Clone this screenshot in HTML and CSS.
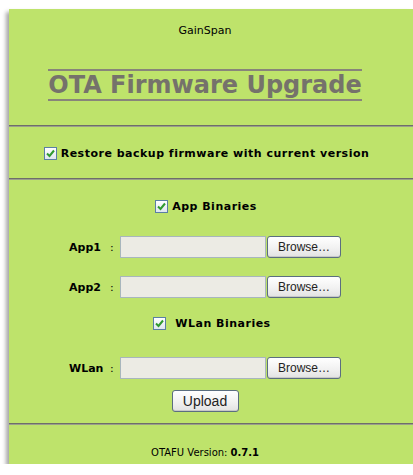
FILE: index.html
```html
<!DOCTYPE html>
<html>
<head>
<meta charset="utf-8">
<title>OTA Firmware Upgrade</title>
<link rel="stylesheet" href="styles.css">
</head>
<body>
<div class="panel">
  <div class="head">
    <div class="brand">GainSpan</div>
    <h1 class="title"><span>OTA Firmware Upgrade</span></h1>
  </div>
  <div class="rule"></div>
  <div class="restore">
    <label class="check bold">
      <span class="box"><svg viewBox="0 0 13 13" width="13" height="13"><path d="M3 6.5 L5.5 9 L10 3.5" fill="none" stroke="#2f9a2f" stroke-width="2"/></svg></span>Restore backup firmware with current version
    </label>
  </div>
  <div class="rule"></div>
  <form class="files">
    <label class="check bold group apps">
      <span class="box"><svg viewBox="0 0 13 13" width="13" height="13"><path d="M3 6.5 L5.5 9 L10 3.5" fill="none" stroke="#2f9a2f" stroke-width="2"/></svg></span>App Binaries
    </label>
    <div class="row">
      <span class="lbl">App1</span><span class="colon">:</span>
      <span class="field"></span>
      <button type="button" class="btn browse">Browse…</button>
    </div>
    <div class="row">
      <span class="lbl">App2</span><span class="colon">:</span>
      <span class="field"></span>
      <button type="button" class="btn browse">Browse…</button>
    </div>
    <label class="check bold group wlan">
      <span class="box"><svg viewBox="0 0 13 13" width="13" height="13"><path d="M3 6.5 L5.5 9 L10 3.5" fill="none" stroke="#2f9a2f" stroke-width="2"/></svg></span>WLan Binaries
    </label>
    <div class="row">
      <span class="lbl">WLan</span><span class="colon">:</span>
      <span class="field"></span>
      <button type="button" class="btn browse">Browse…</button>
    </div>
    <div class="submit">
      <button type="button" class="btn upload">Upload</button>
    </div>
  </form>
  <div class="rule"></div>
  <div class="foot">OTAFU Version: <b>0.7.1</b></div>
</div>
</body>
</html>
```

FILE: styles.css
```css
html, body {
  margin: 0;
  background: #ffffff;
}

body {
  font-family: "DejaVu Sans", Verdana, sans-serif;
  font-size: 11px;
  color: #000;
}

.panel {
  margin: 9px 0 0 9px;
  padding-right: 12px;
  height: 455px;
  background: #bee36b;
  box-shadow: -3px 3px 4px rgba(0, 0, 0, 0.35);
  display: flex;
  flex-direction: column;
}

.head {
  height: 116px;
  text-align: center;
}

.brand {
  padding-top: 15px;
  line-height: 13px;
}

.title {
  margin: 32px 0 0;
  font-family: "DejaVu Sans", sans-serif;
  font-size: 24px;
  font-weight: bold;
  color: #75726b;
  line-height: 28px;
}

.title span {
  display: inline-block;
  border-top: 2px solid #88857a;
  border-bottom: 2px solid #88857a;
}

.rule {
  height: 1px;
  border-top: 1px solid #6e6e6a;
  background: #9a9f8a;
  margin-right: -12px;
}

.bold {
  font-weight: bold;
  letter-spacing: 0.5px;
}

.check {
  display: inline-flex;
  align-items: center;
  gap: 4px;
}

.box {
  width: 13px;
  height: 13px;
  box-sizing: border-box;
  border: 1px solid #5a7fa4;
  background: linear-gradient(#ffffff, #dfe6ee);
  display: inline-flex;
}

.box svg {
  margin: -1px;
}

.restore {
  height: 51px;
  padding: 2px 0 0 3px;
  box-sizing: border-box;
  display: flex;
  align-items: center;
  justify-content: center;
}

.files {
  margin: 0;
  height: 243px;
  display: flex;
  flex-direction: column;
  align-items: center;
}

.group {
  margin-top: 20px;
}

.apps {
  margin-left: 2px;
}

.wlan {
  margin-top: 19px;
  margin-left: 14px;
  gap: 9px;
}

.row {
  display: flex;
  align-items: center;
  margin-top: 23px;
}

.row + .row {
  margin-top: 18px;
}

.wlan + .row {
  margin-top: 27px;
}

.lbl {
  width: 41px;
  font-weight: bold;
  white-space: nowrap;
}

.colon {
  width: 3px;
  margin-right: 7px;
}

.field {
  width: 146px;
  height: 22px;
  box-sizing: border-box;
  background: #ecebe4;
  border: 1px solid #a8b6bd;
}

.btn {
  font-family: "Liberation Sans", Arial, sans-serif;
  font-size: 12px;
  color: #222;
  background: linear-gradient(#ffffff, #f0f0f0 60%, #e2e2e2);
  border: 1px solid #5b6e80;
  border-radius: 3px;
  box-sizing: border-box;
  height: 22px;
  padding: 0;
  box-shadow: inset 0 -1px 0 #c8c8c8;
}

.browse {
  width: 74px;
  margin-left: 1px;
}

.submit {
  margin-top: 11px;
}

.upload {
  width: 67px;
  font-size: 14px;
}

.foot {
  flex: 1;
  display: flex;
  align-items: center;
  justify-content: center;
  padding-top: 16px;
  font-size: 10px;
}

.foot b {
  margin-left: 3px;
}
```
